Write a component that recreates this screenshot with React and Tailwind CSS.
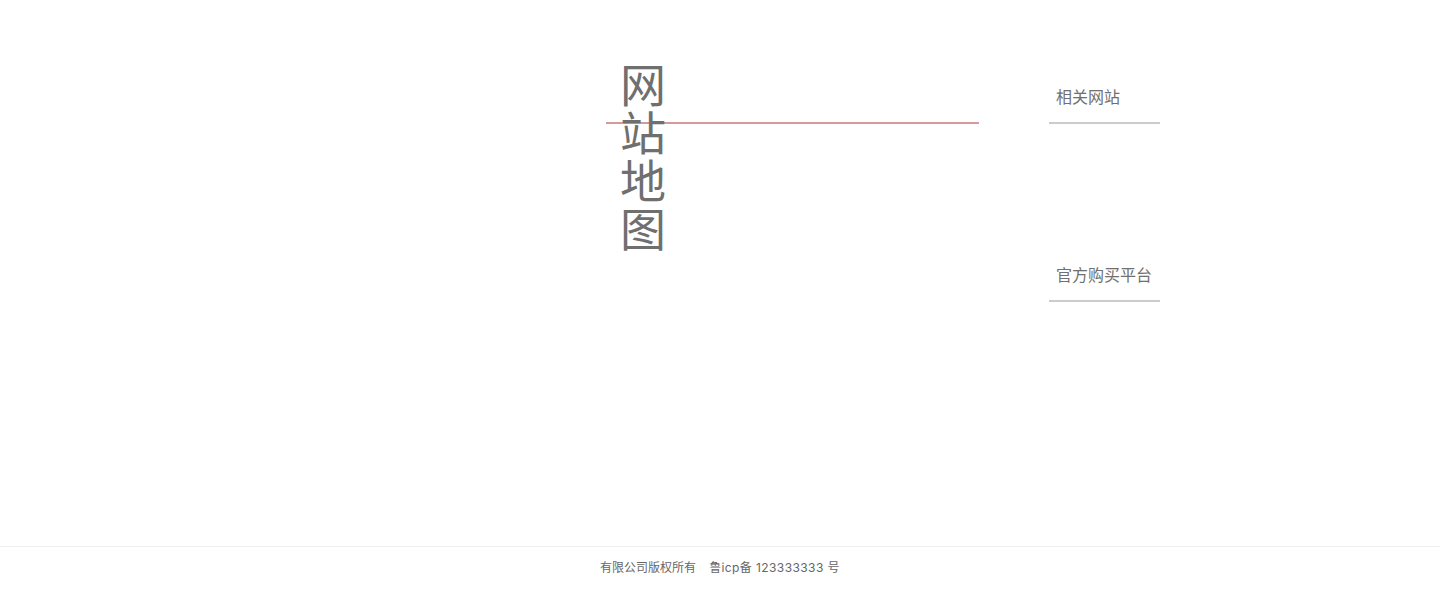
export default function App() {
  return (
    <div
      className="min-h-[589px] flex flex-col bg-white text-[#666]"
      style={{ fontFamily: '"Inter", "Noto Sans CJK SC", sans-serif' }}
    >
      <main className="flex-1 flex pl-[606px] pt-[61px]">
        <div className="relative w-[373px]">
          <div className="absolute left-0 top-[61px] w-[373px] h-[2px] bg-[#d59a9b]" />
          <h1 className="relative pl-[14px] w-[80px] text-[46px] leading-[48px] font-normal text-[#6f6f6f]">
            <span className="block">网</span>
            <span className="block">站</span>
            <span className="block">地</span>
            <span className="block">图</span>
          </h1>
        </div>
        <div className="ml-[70px] w-[111px] flex flex-col gap-[139px] pt-[24px]">
          <a className="block border-b-2 border-[#cccccc] pl-[7px] pb-[13px] text-[16px] leading-[24px] text-[#707070]">
            相关网站
          </a>
          <a className="block border-b-2 border-[#cccccc] pl-[7px] pb-[13px] text-[16px] leading-[24px] text-[#707070]">
            官方购买平台
          </a>
        </div>
      </main>
      <footer className="h-[43px] border-t border-[#eeeeee] flex items-center justify-center text-[12px] text-[#666] pb-[1px]">
        <span>有限公司版权所有</span>
        <span className="ml-[13px] tracking-[0.4px]">鲁icp备 123333333 号</span>
      </footer>
    </div>
  );
}
